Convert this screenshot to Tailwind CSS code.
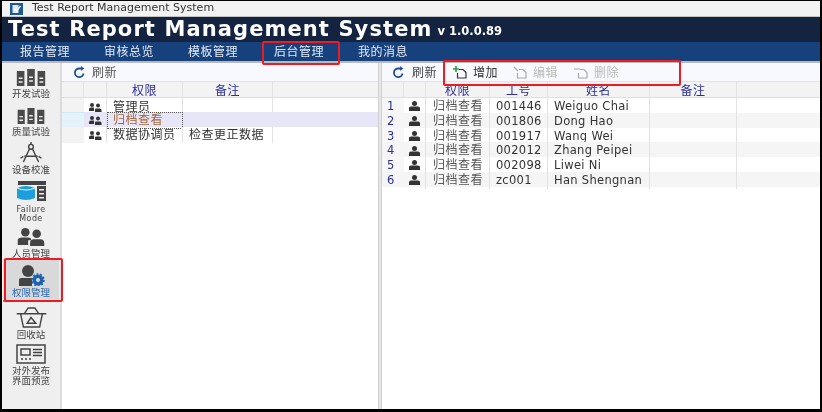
<!DOCTYPE html>
<html lang="en">
<head>
  <meta charset="UTF-8" />
  <meta name="viewport" content="width=device-width, initial-scale=1.0" />
  <title>Test Report Management System</title>
  <script src="https://cdn.jsdelivr.net/npm/@tailwindcss/browser@4"></script>
</head>
<body class="bg-black overflow-hidden font-['DejaVu_Sans','Noto_Sans_CJK_SC',sans-serif]">
<div class="relative w-[822px] h-[412px] px-[2px] pt-[1px] overflow-hidden">
  <div class="flex flex-col h-[408px] bg-white blur-[0.4px]">

    <!-- Window title -->
    <div class="h-[16px] bg-[#f2f2f2] border-b border-[#c4c4c4] flex items-center pl-[8px] gap-[9px] shrink-0">
      <svg width="13" height="12" viewBox="0 0 13 12"><rect width="13" height="12" fill="#1f5a96"/><rect x="2.500" y="2" width="6" height="8" fill="#dfe8f2"/><path d="M4.500 6l2 2 4-5" stroke="#fff" stroke-width="1.400" fill="none"/></svg>
      <span class="text-[11px] text-[#333]">Test Report Management System</span>
    </div>

    <!-- Header -->
    <div class="h-[25px] bg-[#14233f] flex items-center pl-[6px] shrink-0 text-white font-bold whitespace-nowrap">
      <span class="text-[21px] tracking-[1.100px] leading-none">Test Report Management System</span>
      <span class="text-[11.500px] ml-[5px] mt-[5px]">v 1.0.0.89</span>
    </div>

    <!-- Nav -->
    <div class="h-[19px] pt-[1px] bg-[#17417c] flex items-center shrink-0 text-[12px] tracking-[0.5px] text-[#e4ebf5]">
      <span class="w-[84px] pl-[18px]">报告管理</span>
      <span class="w-[84px] pl-[18px]">审核总览</span>
      <span class="w-[85px] pl-[18px]">模板管理</span>
      <span class="w-[85px] pl-[19px]">后台管理</span>
      <span class="pl-[18px]">我的消息</span>
    </div>

    <div class="flex flex-1 min-h-0 border-t-2 border-[#b9b9b9]">
      <!-- Sidebar -->
      <div class="w-[60px] shrink-0 bg-[#efefef] border-r-2 border-[#dcdcdc] flex flex-col items-center text-[9.500px] text-[#444] leading-[11px] text-center">
        <div class="h-[36px] pt-[6px] flex flex-col items-center gap-[2px]">
          <svg width="30" height="18" viewBox="0 0 30 18" fill="#4a4a4a"><path d="M0 2h8v16H0zM11 0h8v18h-8zM22 2h8v16h-8z"/><path d="M2 9h4v1.500H2zM2 13h4v1.500H2zM13 8h4v1.500h-4zM13 12h4v1.500h-4zM24 9h4v1.500h-4zM24 13h4v1.500h-4z" fill="#efefef"/></svg>
          <span>开发试验</span>
        </div>
        <div class="h-[38px] pt-[9px] flex flex-col items-center gap-[2px]">
          <svg width="30" height="18" viewBox="0 0 30 18" fill="#4a4a4a"><path d="M0 2h8v16H0zM11 0h8v18h-8zM22 2h8v16h-8z"/><path d="M2 9h4v1.500H2zM2 13h4v1.500H2zM13 8h4v1.500h-4zM13 12h4v1.500h-4zM24 9h4v1.500h-4zM24 13h4v1.500h-4z" fill="#efefef"/></svg>
          <span>质量试验</span>
        </div>
        <div class="h-[38px] pt-[5px] flex flex-col items-center">
          <svg width="24" height="22" viewBox="0 0 24 22" fill="none" stroke="#444" stroke-width="1.500"><circle cx="12" cy="5" r="2.500"/><path d="M12 0v2.500M10.500 7L4 21M13.500 7L20 21M5 15h14M1 17l3-2M23 17l-3-2"/></svg>
          <span class="mt-[1px]">设备校准</span>
        </div>
        <div class="h-[50px] pt-[6px] flex flex-col items-center text-[#444]">
          <svg width="30" height="20" viewBox="0 0 30 20"><path d="M2 0h28v4H2z" fill="#444"/><path d="M21 5h9v15h-9z" fill="#444"/><path d="M23 8h5v1.500h-5zM23 12h5v1.500h-5zM23 16h5v1.500h-5z" fill="#efefef"/><path d="M1 7q9-4 18 0v10q-9 4-18 0z" fill="#1d9fde"/><path d="M1 7q9 4 18 0" stroke="#e8f6fd" fill="none"/></svg>
          <span class="mt-[4px] leading-[9px] text-[8px] tracking-[0.4px]">Failure<br>Mode</span>
        </div>
        <div class="h-[34px] pt-[3px] flex flex-col items-center">
          <svg width="30" height="19" viewBox="0 0 30 19" fill="#444"><circle cx="9" cy="4.500" r="4.500"/><circle cx="21" cy="6" r="4.500"/><path d="M1 18v-5q0-3 5-3h6q3 0 3 2v1h-3v5zM14 19v-3q0-4 4-4h7q4 0 4 4v3z"/></svg>
          <span class="mt-[2px]">人员管理</span>
        </div>
        <div class="w-[56px] h-[43px] bg-[#d9d9d9] border-b-2 border-[#4aa3df] flex flex-col items-center pt-[6px] text-[#2a69b0]">
          <svg width="28" height="21" viewBox="0 0 28 21"><circle cx="11" cy="6" r="6" fill="#444"/><path d="M2 21v-6q0-2 2-2h11v8z" fill="#444"/><circle cx="21" cy="15" r="5.500" fill="#1c62b0"/><circle cx="21" cy="15" r="2" fill="#d9d9d9"/><circle cx="21" cy="15" r="6" fill="none" stroke="#1c62b0" stroke-width="1.500" stroke-dasharray="2 1.700"/></svg>
          <span class="mt-[1px]">权限管理</span>
        </div>
        <div class="h-[38px] pt-[5px] flex flex-col items-center">
          <svg width="33" height="22" viewBox="0 0 33 22" fill="none" stroke="#444" stroke-width="1.500"><path d="M1 7h31M5 7l3 14h17l3-14M9 7l4-6h7l4 6M12 17l4-6 5 6z"/></svg>
          <span class="mt-[1px]">回收站</span>
        </div>
        <div class="flex flex-col items-center pt-[4px]">
          <svg width="30" height="20" viewBox="0 0 30 20" fill="none" stroke="#444" stroke-width="1.500"><rect x="1" y="1" width="28" height="18"/><rect x="5" y="5" width="9" height="6"/><path d="M17 5.500h9M17 8.500h9M17 11.500h9M5 15h2M9 15h2M13 15h2"/></svg>
          <span class="mt-[2px] leading-[10px]">对外发布<br>界面预览</span>
        </div>
      </div>

      <!-- Left panel -->
      <div class="w-[316px] shrink-0 flex flex-col text-[12px] tracking-[0.5px] text-[#333] whitespace-nowrap">
        <div class="h-[19px] bg-[#f7f9fe] border-b border-[#e2e2e2] flex items-center pl-[11px] gap-[6px] shrink-0">
          <svg width="13" height="13" viewBox="0 0 13 13" fill="none" stroke="#1d4f91" stroke-width="1.800"><path d="M10.500 7.500A4.300 4.300 0 1 1 6.500 2.500H9"/><path d="M8.200 0l3 2.500-3 2.500z" fill="#1d4f91" stroke="none"/></svg>
          <span class="text-[#555] mt-[1px]">刷新</span>
        </div>
        <div class="grid grid-cols-[22px_23px_76px_90px_1fr] h-[16px] bg-[#f3f3f3] border-b border-[#dedede] text-[#2e2e9a] text-center leading-[19px] shrink-0">
          <div class="border-r border-[#e2e2e2]"></div>
          <div class="border-r border-[#e2e2e2]"></div>
          <div class="border-r border-[#e2e2e2]">权限</div>
          <div class="border-r border-[#e2e2e2]">备注</div>
          <div></div>
        </div>
        <div class="grid grid-cols-[22px_23px_76px_90px_1fr] h-[14px] leading-[18px]">
          <div class="bg-[#f3f3f3]"></div>
          <div class="border-r border-[#e2e2e2] flex items-center justify-center"><svg width="14" height="9" viewBox="0 0 14 9" fill="#333"><circle cx="4" cy="2" r="2"/><circle cx="10" cy="2.500" r="2"/><path d="M1 8V6q0-1.500 2-1.500h3V8zM7 9V6.500q0-1 1-1h4q1.500 0 1.500 1.500v2z"/></svg></div>
          <div class="border-r border-[#e2e2e2] pl-[6px]">管理员</div>
          <div class="border-r border-[#e2e2e2]"></div>
          <div></div>
        </div>
        <div class="grid grid-cols-[22px_23px_76px_90px_1fr] h-[15px] leading-[15px] bg-[#e6e6f8]">
          <div class="bg-[#e4f2fb] border-y border-[#cfe8f7]"></div>
          <div class="border-r border-[#e2e2e2] flex items-center justify-center"><svg width="14" height="9" viewBox="0 0 14 9" fill="#333"><circle cx="4" cy="2" r="2"/><circle cx="10" cy="2.500" r="2"/><path d="M1 8V6q0-1.500 2-1.500h3V8zM7 9V6.500q0-1 1-1h4q1.500 0 1.500 1.500v2z"/></svg></div>
          <div class="border border-dotted border-[#555] pl-[5px] text-[#a5663c]">归档查看</div>
          <div></div>
          <div></div>
        </div>
        <div class="grid grid-cols-[22px_23px_76px_90px_1fr] h-[14px] leading-[16px]">
          <div class="bg-[#f3f3f3]"></div>
          <div class="border-r border-[#e2e2e2] flex items-center justify-center"><svg width="14" height="9" viewBox="0 0 14 9" fill="#333"><circle cx="4" cy="2" r="2"/><circle cx="10" cy="2.500" r="2"/><path d="M1 8V6q0-1.500 2-1.500h3V8zM7 9V6.500q0-1 1-1h4q1.500 0 1.500 1.500v2z"/></svg></div>
          <div class="border-r border-[#e2e2e2] pl-[6px]">数据协调员</div>
          <div class="border-r border-[#e2e2e2] pl-[6px]">检查更正数据</div>
          <div></div>
        </div>
      </div>

      <!-- Splitter -->
      <div class="w-[4px] shrink-0 bg-[#e6e6e6] border-x border-[#d0d0d0]"></div>

      <!-- Right panel -->
      <div class="flex-1 min-w-0 flex flex-col text-[11.500px] tracking-[0.3px] text-[#333] whitespace-nowrap">
        <div class="h-[19px] bg-[#f7f9fe] border-b border-[#e2e2e2] flex items-center pl-[10px] shrink-0 text-[12px] tracking-[0.5px]">
          <svg width="13" height="13" viewBox="0 0 13 13" fill="none" stroke="#1d4f91" stroke-width="1.800"><path d="M10.500 7.500A4.300 4.300 0 1 1 6.500 2.500H9"/><path d="M8.200 0l3 2.500-3 2.500z" fill="#1d4f91" stroke="none"/></svg>
          <span class="ml-[7px] mt-[1px] text-[#444]">刷新</span>
          <svg class="ml-[16px]" width="14" height="13" viewBox="0 0 14 13" fill="none" stroke="#333" stroke-width="1.200"><path d="M6 3.500h4l3 3v5.500H4.500V7"/><path d="M3 0v6M0 3h6" stroke="#2a9d3c" stroke-width="1.600"/></svg>
          <span class="ml-[6px] mt-[1px]">增加</span>
          <svg class="ml-[15px]" width="14" height="13" viewBox="0 0 14 13" fill="none" stroke="#aaa" stroke-width="1.200"><path d="M6 3.500h4l3 3v5.500H4.500V7M1 1l4 4"/></svg>
          <span class="ml-[6px] mt-[1px] text-[#bbb]">编辑</span>
          <svg class="ml-[16px]" width="14" height="13" viewBox="0 0 14 13" fill="none" stroke="#aaa" stroke-width="1.200"><path d="M6 3.500h4l3 3v5.500H4.500V7M0 3h6"/></svg>
          <span class="ml-[6px] mt-[1px] text-[#bbb]">删除</span>
        </div>
        <div class="grid grid-cols-[22px_22px_64px_58px_102px_87px_1fr] h-[16px] bg-[#f3f3f3] border-b border-[#dedede] text-[#2e2e9a] text-center leading-[19px] shrink-0 text-[12px] tracking-[0.5px]">
          <div class="border-r border-[#e2e2e2]"></div>
          <div class="border-r border-[#e2e2e2]"></div>
          <div class="border-r border-[#e2e2e2]">权限</div>
          <div class="border-r border-[#e2e2e2]">工号</div>
          <div class="border-r border-[#e2e2e2]">姓名</div>
          <div class="border-r border-[#e2e2e2]">备注</div>
          <div></div>
        </div>
        <div class="grid grid-cols-[22px_22px_64px_58px_102px_87px_1fr] h-[14.750px] leading-[16.750px]">
          <div class="pl-[5px] text-[#2e2e9a] bg-[#f7f7f7]">1</div>
          <div class="border-r border-[#e2e2e2] flex items-center justify-center"><svg width="11" height="10" viewBox="0 0 11 10" fill="#333"><circle cx="5.500" cy="2.500" r="2.500"/><path d="M0 10V7q0-1.500 2-1.500h7q2 0 2 1.500v3z"/></svg></div>
          <div class="border-r border-[#e2e2e2] pl-[7px] text-[#555] text-[12px] tracking-[0.5px]">归档查看</div>
          <div class="border-r border-[#e2e2e2] pl-[6px]">001446</div>
          <div class="border-r border-[#e2e2e2] pl-[6px]">Weiguo Chai</div>
          <div class="border-r border-[#e2e2e2]"></div>
          <div></div>
        </div>
        <div class="grid grid-cols-[22px_22px_64px_58px_102px_87px_1fr] h-[14.750px] leading-[16.750px] bg-[#f5f5f5]">
          <div class="pl-[5px] text-[#2e2e9a]">2</div>
          <div class="border-r border-[#e2e2e2] flex items-center justify-center"><svg width="11" height="10" viewBox="0 0 11 10" fill="#333"><circle cx="5.500" cy="2.500" r="2.500"/><path d="M0 10V7q0-1.500 2-1.500h7q2 0 2 1.500v3z"/></svg></div>
          <div class="border-r border-[#e2e2e2] pl-[7px] text-[#555] text-[12px] tracking-[0.5px]">归档查看</div>
          <div class="border-r border-[#e2e2e2] pl-[6px]">001806</div>
          <div class="border-r border-[#e2e2e2] pl-[6px]">Dong Hao</div>
          <div class="border-r border-[#e2e2e2]"></div>
          <div></div>
        </div>
        <div class="grid grid-cols-[22px_22px_64px_58px_102px_87px_1fr] h-[14.750px] leading-[16.750px]">
          <div class="pl-[5px] text-[#2e2e9a] bg-[#f7f7f7]">3</div>
          <div class="border-r border-[#e2e2e2] flex items-center justify-center"><svg width="11" height="10" viewBox="0 0 11 10" fill="#333"><circle cx="5.500" cy="2.500" r="2.500"/><path d="M0 10V7q0-1.500 2-1.500h7q2 0 2 1.500v3z"/></svg></div>
          <div class="border-r border-[#e2e2e2] pl-[7px] text-[#555] text-[12px] tracking-[0.5px]">归档查看</div>
          <div class="border-r border-[#e2e2e2] pl-[6px]">001917</div>
          <div class="border-r border-[#e2e2e2] pl-[6px]">Wang Wei</div>
          <div class="border-r border-[#e2e2e2]"></div>
          <div></div>
        </div>
        <div class="grid grid-cols-[22px_22px_64px_58px_102px_87px_1fr] h-[14.750px] leading-[16.750px] bg-[#f5f5f5]">
          <div class="pl-[5px] text-[#2e2e9a]">4</div>
          <div class="border-r border-[#e2e2e2] flex items-center justify-center"><svg width="11" height="10" viewBox="0 0 11 10" fill="#333"><circle cx="5.500" cy="2.500" r="2.500"/><path d="M0 10V7q0-1.500 2-1.500h7q2 0 2 1.500v3z"/></svg></div>
          <div class="border-r border-[#e2e2e2] pl-[7px] text-[#555] text-[12px] tracking-[0.5px]">归档查看</div>
          <div class="border-r border-[#e2e2e2] pl-[6px]">002012</div>
          <div class="border-r border-[#e2e2e2] pl-[6px]">Zhang Peipei</div>
          <div class="border-r border-[#e2e2e2]"></div>
          <div></div>
        </div>
        <div class="grid grid-cols-[22px_22px_64px_58px_102px_87px_1fr] h-[14.750px] leading-[16.750px]">
          <div class="pl-[5px] text-[#2e2e9a] bg-[#f7f7f7]">5</div>
          <div class="border-r border-[#e2e2e2] flex items-center justify-center"><svg width="11" height="10" viewBox="0 0 11 10" fill="#333"><circle cx="5.500" cy="2.500" r="2.500"/><path d="M0 10V7q0-1.500 2-1.500h7q2 0 2 1.500v3z"/></svg></div>
          <div class="border-r border-[#e2e2e2] pl-[7px] text-[#555] text-[12px] tracking-[0.5px]">归档查看</div>
          <div class="border-r border-[#e2e2e2] pl-[6px]">002098</div>
          <div class="border-r border-[#e2e2e2] pl-[6px]">Liwei Ni</div>
          <div class="border-r border-[#e2e2e2]"></div>
          <div></div>
        </div>
        <div class="grid grid-cols-[22px_22px_64px_58px_102px_87px_1fr] h-[14.750px] leading-[16.750px] bg-[#f5f5f5]">
          <div class="pl-[5px] text-[#2e2e9a]">6</div>
          <div class="border-r border-[#e2e2e2] flex items-center justify-center"><svg width="11" height="10" viewBox="0 0 11 10" fill="#333"><circle cx="5.500" cy="2.500" r="2.500"/><path d="M0 10V7q0-1.500 2-1.500h7q2 0 2 1.500v3z"/></svg></div>
          <div class="border-r border-[#e2e2e2] pl-[7px] text-[#555] text-[12px] tracking-[0.5px]">归档查看</div>
          <div class="border-r border-[#e2e2e2] pl-[6px]">zc001</div>
          <div class="border-r border-[#e2e2e2] pl-[6px]">Han Shengnan</div>
          <div class="border-r border-[#e2e2e2]"></div>
          <div></div>
        </div>
      </div>
    </div>
  </div>

  <!-- Red annotation boxes -->
  <div class="absolute left-[262px] top-[41px] w-[78px] h-[24px] border-2 border-[#ec1c24] rounded-[2px]"></div>
  <div class="absolute left-[443px] top-[60px] w-[238px] h-[26px] border-2 border-[#ec1c24] rounded-[2px]"></div>
  <div class="absolute left-[4px] top-[258px] w-[59px] h-[44px] border-2 border-[#ec1c24] rounded-[2px]"></div>
</div>
</body>
</html>
